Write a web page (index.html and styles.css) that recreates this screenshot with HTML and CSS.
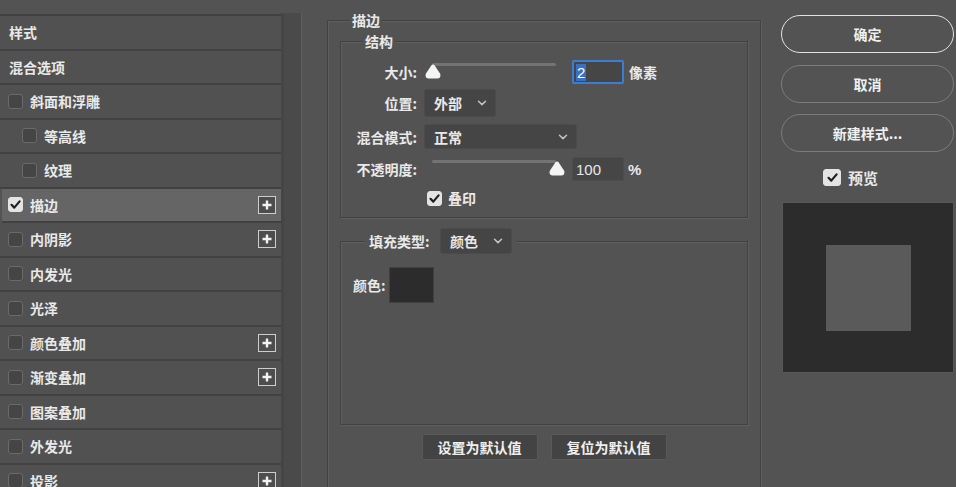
FILE: index.html
```html
<!DOCTYPE html>
<html lang="zh-CN">
<head>
<meta charset="utf-8">
<title>图层样式</title>
<link rel="stylesheet" href="styles.css">
</head>
<body>
<div class="dialog">
  <aside class="styles-panel">
    <ul class="style-list">
      <li class="row head">样式</li>
      <li class="row head">混合选项</li>
      <li class="row"><span class="cb"></span>斜面和浮雕</li>
      <li class="row sub"><span class="cb"></span>等高线</li>
      <li class="row sub"><span class="cb"></span>纹理</li>
      <li class="row selected"><span class="cb on"><svg viewBox="0 0 15 15"><polyline points="3.5,7.8 6.3,10.6 11.6,4.4"/></svg></span>描边<span class="plus"><svg viewBox="0 0 18 18"><path d="M9 4.5v9M4.5 9h9"/></svg></span></li>
      <li class="row"><span class="cb"></span>内阴影<span class="plus"><svg viewBox="0 0 18 18"><path d="M9 4.5v9M4.5 9h9"/></svg></span></li>
      <li class="row"><span class="cb"></span>内发光</li>
      <li class="row"><span class="cb"></span>光泽</li>
      <li class="row"><span class="cb"></span>颜色叠加<span class="plus"><svg viewBox="0 0 18 18"><path d="M9 4.5v9M4.5 9h9"/></svg></span></li>
      <li class="row"><span class="cb"></span>渐变叠加<span class="plus"><svg viewBox="0 0 18 18"><path d="M9 4.5v9M4.5 9h9"/></svg></span></li>
      <li class="row"><span class="cb"></span>图案叠加</li>
      <li class="row"><span class="cb"></span>外发光</li>
      <li class="row"><span class="cb"></span>投影<span class="plus"><svg viewBox="0 0 18 18"><path d="M9 4.5v9M4.5 9h9"/></svg></span></li>
    </ul>
    <div class="gutter"></div>
  </aside>

  <main class="main">
    <fieldset class="group outer">
      <legend>描边</legend>
      <fieldset class="group struct">
        <legend>结构</legend>
        <div class="frow r1">
          <span class="lbl">大小:</span>
          <div class="slider"><span class="track"></span><svg class="thumb start" viewBox="0 0 16 15"><path d="M8 0.6 C8.8 0.6 9.3 1 9.7 1.6 L15 9.6 C16.1 11.9 15 14.4 12.3 14.4 L3.7 14.4 C1 14.4 -0.1 11.9 1 9.6 L6.3 1.6 C6.7 1 7.2 0.6 8 0.6Z"/></svg></div>
          <span class="num focus"><span class="sel">2</span></span>
          <span class="unit">像素</span>
        </div>
        <div class="frow r2">
          <span class="lbl">位置:</span>
          <div class="select w-pos">外部<svg class="chev" viewBox="0 0 10 6"><polyline points="1.5,1.2 5,4.6 8.5,1.2"/></svg></div>
        </div>
        <div class="frow r3">
          <span class="lbl">混合模式:</span>
          <div class="select w-mode">正常<svg class="chev" viewBox="0 0 10 6"><polyline points="1.5,1.2 5,4.6 8.5,1.2"/></svg></div>
        </div>
        <div class="frow r4">
          <span class="lbl">不透明度:</span>
          <div class="slider"><span class="track"></span><svg class="thumb end" viewBox="0 0 16 15"><path d="M8 0.6 C8.8 0.6 9.3 1 9.7 1.6 L15 9.6 C16.1 11.9 15 14.4 12.3 14.4 L3.7 14.4 C1 14.4 -0.1 11.9 1 9.6 L6.3 1.6 C6.7 1 7.2 0.6 8 0.6Z"/></svg></div>
          <span class="num">100</span>
          <span class="unit pct">%</span>
        </div>
        <div class="frow r5">
          <span class="lbl"></span>
          <span class="cb on small"><svg viewBox="0 0 15 15"><polyline points="3.5,7.8 6.3,10.6 11.6,4.4"/></svg></span>
          <span class="cb-text">叠印</span>
        </div>
      </fieldset>

      <fieldset class="group fill">
        <legend>
          <span class="fill-lbl">填充类型:</span>
          <span class="select w-fill">颜色<svg class="chev" viewBox="0 0 10 6"><polyline points="1.5,1.2 5,4.6 8.5,1.2"/></svg></span>
        </legend>
        <div class="fill-body">
          <span class="color-lbl">颜色:</span>
          <span class="swatch"></span>
        </div>
      </fieldset>

      <div class="btn-row">
        <button class="btn">设置为默认值</button>
        <button class="btn">复位为默认值</button>
      </div>
    </fieldset>
  </main>

  <aside class="side">
    <button class="pill primary">确定</button>
    <button class="pill">取消</button>
    <button class="pill">新建样式...</button>
    <div class="preview-check">
      <span class="cb on big"><svg viewBox="0 0 15 15"><polyline points="3.5,7.8 6.3,10.6 11.6,4.4"/></svg></span>
      <span>预览</span>
    </div>
    <div class="preview">
      <div class="preview-sq"></div>
    </div>
  </aside>
</div>
</body>
</html>
```

FILE: styles.css
```css
* { box-sizing: border-box; }

html, body {
  margin: 0;
  padding: 0;
  background: #535353;
}

body {
  width: 956px;
  height: 487px;
  overflow: hidden;
  font-family: "Noto Sans CJK SC", "Noto Sans", sans-serif;
  font-size: 14px;
  font-weight: 700;
  color: #e9e9e9;
}

.dialog {
  display: flex;
  height: 487px;
}

/* ---------- left list ---------- */
.styles-panel {
  display: flex;
  flex: none;
  width: 302px;
}

.style-list {
  list-style: none;
  margin: 14px 0 0;
  padding: 0;
  width: 281px;
  border-top: 2px solid #414141;
}

.row {
  display: flex;
  align-items: center;
  height: 34.5px;
  padding-left: 8px;
  padding-right: 5px;
  border-bottom: 2px solid #414141;
  background: #515151;
  white-space: nowrap;
}

.row.head { padding-left: 9px; }
.row.sub { padding-left: 22px; }
.row.selected {
  background: #656565;
  margin-left: 2px;
  padding-left: 6px;
}

.cb {
  flex: none;
  width: 15px;
  height: 15px;
  margin-right: 7px;
  border: 1.5px solid #6a6a6a;
  border-radius: 3px;
  background: #454545;
  display: inline-flex;
  align-items: center;
  justify-content: center;
}

.cb svg { width: 15px; height: 15px; flex: none; }
.cb polyline {
  fill: none;
  stroke: #1f1f1f;
  stroke-width: 2.2;
  stroke-linecap: round;
  stroke-linejoin: round;
}

.cb.on {
  background: #e4e4e4;
  border-color: #e4e4e4;
}

.plus {
  margin-left: auto;
  width: 18px;
  height: 18px;
  border: 1.7px solid #cdcdcd;
  background: #4d4d4d;
  display: inline-flex;
  align-items: center;
  justify-content: center;
}
.plus svg { width: 18px; height: 18px; flex: none; }
.plus path {
  stroke: #f2f2f2;
  stroke-width: 2.4;
  fill: none;
}

.gutter {
  flex: none;
  width: 21px;
  margin-top: 13px;
  background: #4a4a4a;
  border-left: 3px solid #454545;
  border-right: 1px solid #5d5d5d;
}

/* ---------- main ---------- */
.main {
  flex: none;
  width: 434px;
  margin-left: 25px;
}

.group {
  margin: 0;
  border: 1px solid #424242;
  box-shadow: inset 1px 1px 0 #5e5e5e, 1px 1px 0 #5e5e5e;
  padding: 0 12px;
  min-width: 0;
}

.group > legend {
  margin-left: 10px;
  padding: 0 2px;
  line-height: 20px;
  background: #535353;
}

.outer {
  margin-top: 10px;
  height: 520px;
  padding-top: 1px;
}

.struct {
  padding-top: 9px;
  padding-bottom: 11px;
}

.frow {
  display: flex;
  align-items: center;
}

.lbl {
  flex: none;
  width: 64px;
  margin-right: 7px;
  text-align: right;
}

.r1 { height: 24px; }
.r2 { height: 28px; margin-top: 5px; }
.r3 { height: 25px; margin-top: 7px; }
.r4 { height: 24px; margin-top: 8px; }
.r5 { height: 16px; margin-top: 9px; }

.slider {
  position: relative;
  flex: none;
  width: 132px;
  height: 24px;
}

.track {
  position: absolute;
  left: 8px;
  right: 0;
  top: 3px;
  height: 3px;
  border-radius: 2px;
  background: #737373;
}

.thumb {
  position: absolute;
  top: 4px;
  width: 16px;
  height: 15px;
}
.thumb path { fill: #f4f4f4; }
.thumb.start { left: 1px; }
.thumb.end { left: 125px; }

.num {
  flex: none;
  width: 52px;
  height: 24px;
  margin-left: 16px;
  padding-left: 3px;
  background: #464646;
  border: 1px solid #4d4d4d;
  border-radius: 2px;
  display: flex;
  align-items: center;
  font-family: "Liberation Sans", "Noto Sans", sans-serif;
  font-size: 15px;
  font-weight: 400;
  color: #e8e8e8;
}

.num.focus {
  border: 2px solid #3c7dd4;
  padding-left: 2px;
}

.sel {
  background: #3b6fc2;
  color: #fff;
  line-height: 17px;
  padding: 0 1px;
}

.unit { margin-left: 5px; }
.unit.pct {
  margin-left: 4px;
  font-family: "Liberation Sans", sans-serif;
  font-size: 15px;
  font-weight: 700;
}

.select {
  flex: none;
  display: flex;
  align-items: center;
  justify-content: space-between;
  padding: 0 8px 0 9px;
  background: #454545;
  border: 1px solid #4b4b4b;
  border-radius: 3px;
}

.w-pos { width: 72px; height: 28px; }
.w-mode { width: 153px; height: 25px; }
.w-fill { width: 72px; height: 26px; }

.chev {
  width: 10px;
  height: 6px;
}
.chev polyline {
  fill: none;
  stroke: #c4c4c4;
  stroke-width: 1.5;
  stroke-linecap: round;
  stroke-linejoin: round;
}

.cb.small {
  margin-left: 3px;
  margin-right: 6px;
}

/* fill */
.fill {
  margin-top: 10px;
  padding-top: 13px;
}

.fill > legend {
  display: flex;
  align-items: center;
  margin-left: 12px;
  padding: 0 4px;
  line-height: 26px;
}

.fill-lbl {
  width: 64px;
  margin-right: 7px;
  white-space: nowrap;
}

.fill-body {
  height: 157px;
  display: flex;
  align-items: flex-start;
}

.color-lbl {
  margin-right: 3px;
  margin-top: 8px;
}

.swatch {
  width: 45px;
  height: 36px;
  background: #2c2c2c;
  border: 1px solid #404040;
}

.btn-row {
  display: flex;
  justify-content: center;
  gap: 13px;
  margin-top: 9px;
}

.btn {
  width: 116px;
  height: 26px;
  padding: 0;
  background: #434343;
  border: 1px solid #595959;
  border-radius: 2px;
  font: inherit;
  color: #efefef;
}

/* ---------- side ---------- */
.side {
  flex: none;
  width: 173px;
  margin-left: 20px;
  padding-top: 15px;
  display: flex;
  flex-direction: column;
}

.pill {
  height: 38px;
  margin-bottom: 11.5px;
  padding: 0;
  border: 1.3px solid #7c7c7c;
  border-radius: 19px;
  background: transparent;
  font: inherit;
  color: #f0f0f0;
}

.pill.primary {
  border: 1.6px solid #e2e2e2;
}

.preview-check {
  display: flex;
  align-items: center;
  height: 18px;
  margin-top: 4.5px;
  padding-left: 42px;
  font-size: 15px;
}

.cb.big {
  width: 18px;
  height: 17px;
  margin-right: 7px;
}

.preview {
  margin-top: 16px;
  margin-left: 1px;
  width: 172px;
  height: 171px;
  background: #2c2c2c;
  border: 1px solid #585858;
  display: flex;
  align-items: center;
  justify-content: center;
}

.preview-sq {
  width: 85px;
  height: 86px;
  background: #5a5a5a;
}
```
